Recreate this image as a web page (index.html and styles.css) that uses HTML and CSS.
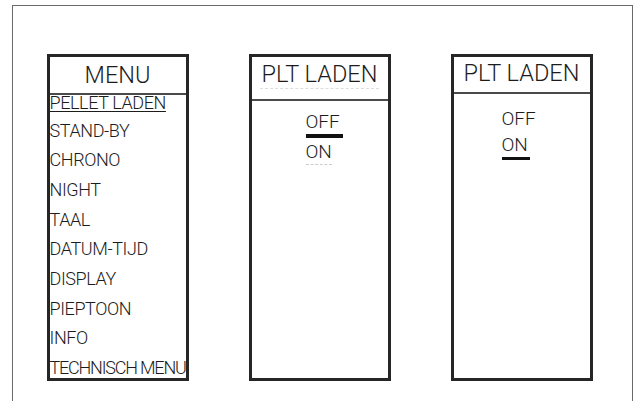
FILE: index.html
```html
<!DOCTYPE html>
<html lang="en">
<head>
    <meta charset="UTF-8">
    <title>Menu - Pellet laden</title>
    <link rel="stylesheet" href="styles.css">
</head>
<body>
    <div class="frame">
        <!-- Main menu screen -->
        <div class="panel">
            <div class="panel-head head-menu">MENU</div>
            <ul class="menu-list">
                <li class="active">PELLET LADEN</li>
                <li>STAND-BY</li>
                <li>CHRONO</li>
                <li>NIGHT</li>
                <li>TAAL</li>
                <li>DATUM-TIJD</li>
                <li>DISPLAY</li>
                <li>PIEPTOON</li>
                <li>INFO</li>
                <li class="wide">TECHNISCH MENU</li>
            </ul>
        </div>

        <!-- Pellet laden, cursor between OFF and ON -->
        <div class="panel">
            <div class="panel-head head-tall"><span class="ghost">PLT LADEN</span></div>
            <div class="options opt-mid">
                <span class="opt">OFF</span>
                <span class="cursor"></span>
                <span class="opt ghost-line">ON</span>
            </div>
        </div>

        <!-- Pellet laden, ON selected -->
        <div class="panel">
            <div class="panel-head head-short">PLT LADEN</div>
            <div class="options opt-on">
                <span class="opt">OFF</span>
                <span class="opt selected">ON</span>
            </div>
        </div>
    </div>
</body>
</html>
```

FILE: styles.css
```css
/* Page */
html, body {
    margin: 0;
    padding: 0;
    background: #fff;
    color: #1c1c1c;
    font-family: Roboto, "Liberation Sans", Arial, sans-serif;
    font-weight: 300;
}

*, *::before, *::after {
    box-sizing: border-box;
}

/* Outer drawing frame (open at the bottom) */
.frame {
    margin: 5px 0 0 12px;
    width: 621px;
    height: 396px;
    border: 1.5px solid #6a6a6a;
    border-bottom: none;
    padding: 47.5px 0 0 33.5px;
    display: flex;
    gap: 60px;
}

/* Display panels */
.panel {
    width: 142px;
    height: 327px;
    border: 3px solid #262626;
    display: flex;
    flex-direction: column;
    overflow: hidden;
}

.panel-head {
    flex-shrink: 0;
    display: flex;
    justify-content: center;
    border-bottom: 2px solid #4a4a4a;
    font-size: 23.5px;
    line-height: 26px;
}

.head-menu {
    height: 38px;
    padding-top: 5px;
}

.head-tall {
    height: 44px;
    padding-top: 4px;
}

.head-short {
    height: 37px;
    padding-top: 3px;
}

/* faint leftover line under the title */
.ghost {
    border-bottom: 1px dashed #ddd;
    height: 28px;
    padding: 0 2px;
}

/* Menu list */
.menu-list {
    list-style: none;
    margin: 0;
    padding: 0;
    font-size: 18px;
    letter-spacing: -0.4px;
}

.menu-list li {
    height: 29.7px;
    line-height: 20px;
    white-space: nowrap;
}

.menu-list li.active {
    text-decoration: underline;
    text-decoration-thickness: 1px;
    text-underline-offset: 2px;
    height: 26px;
    line-height: 14px;
    padding-top: 1px;
}

.menu-list li.wide {
    height: 20px;
    letter-spacing: -1.2px;
}

/* OFF / ON options */
.options {
    display: flex;
    flex-direction: column;
    align-items: flex-start;
    font-size: 19px;
}

.opt {
    line-height: 19px;
}

.opt-mid {
    padding: 11px 0 0 54px;
}

.cursor {
    width: 37px;
    height: 4px;
    background: #111;
    margin: 3px 0 4px;
}

.ghost-line {
    border-bottom: 1px dashed #ccc;
    padding-bottom: 3px;
}

.opt-on {
    padding: 15px 0 0 48px;
    gap: 7px;
}

.selected {
    border-bottom: 3.5px solid #111;
    padding: 0 2px 3px 0;
}
```
